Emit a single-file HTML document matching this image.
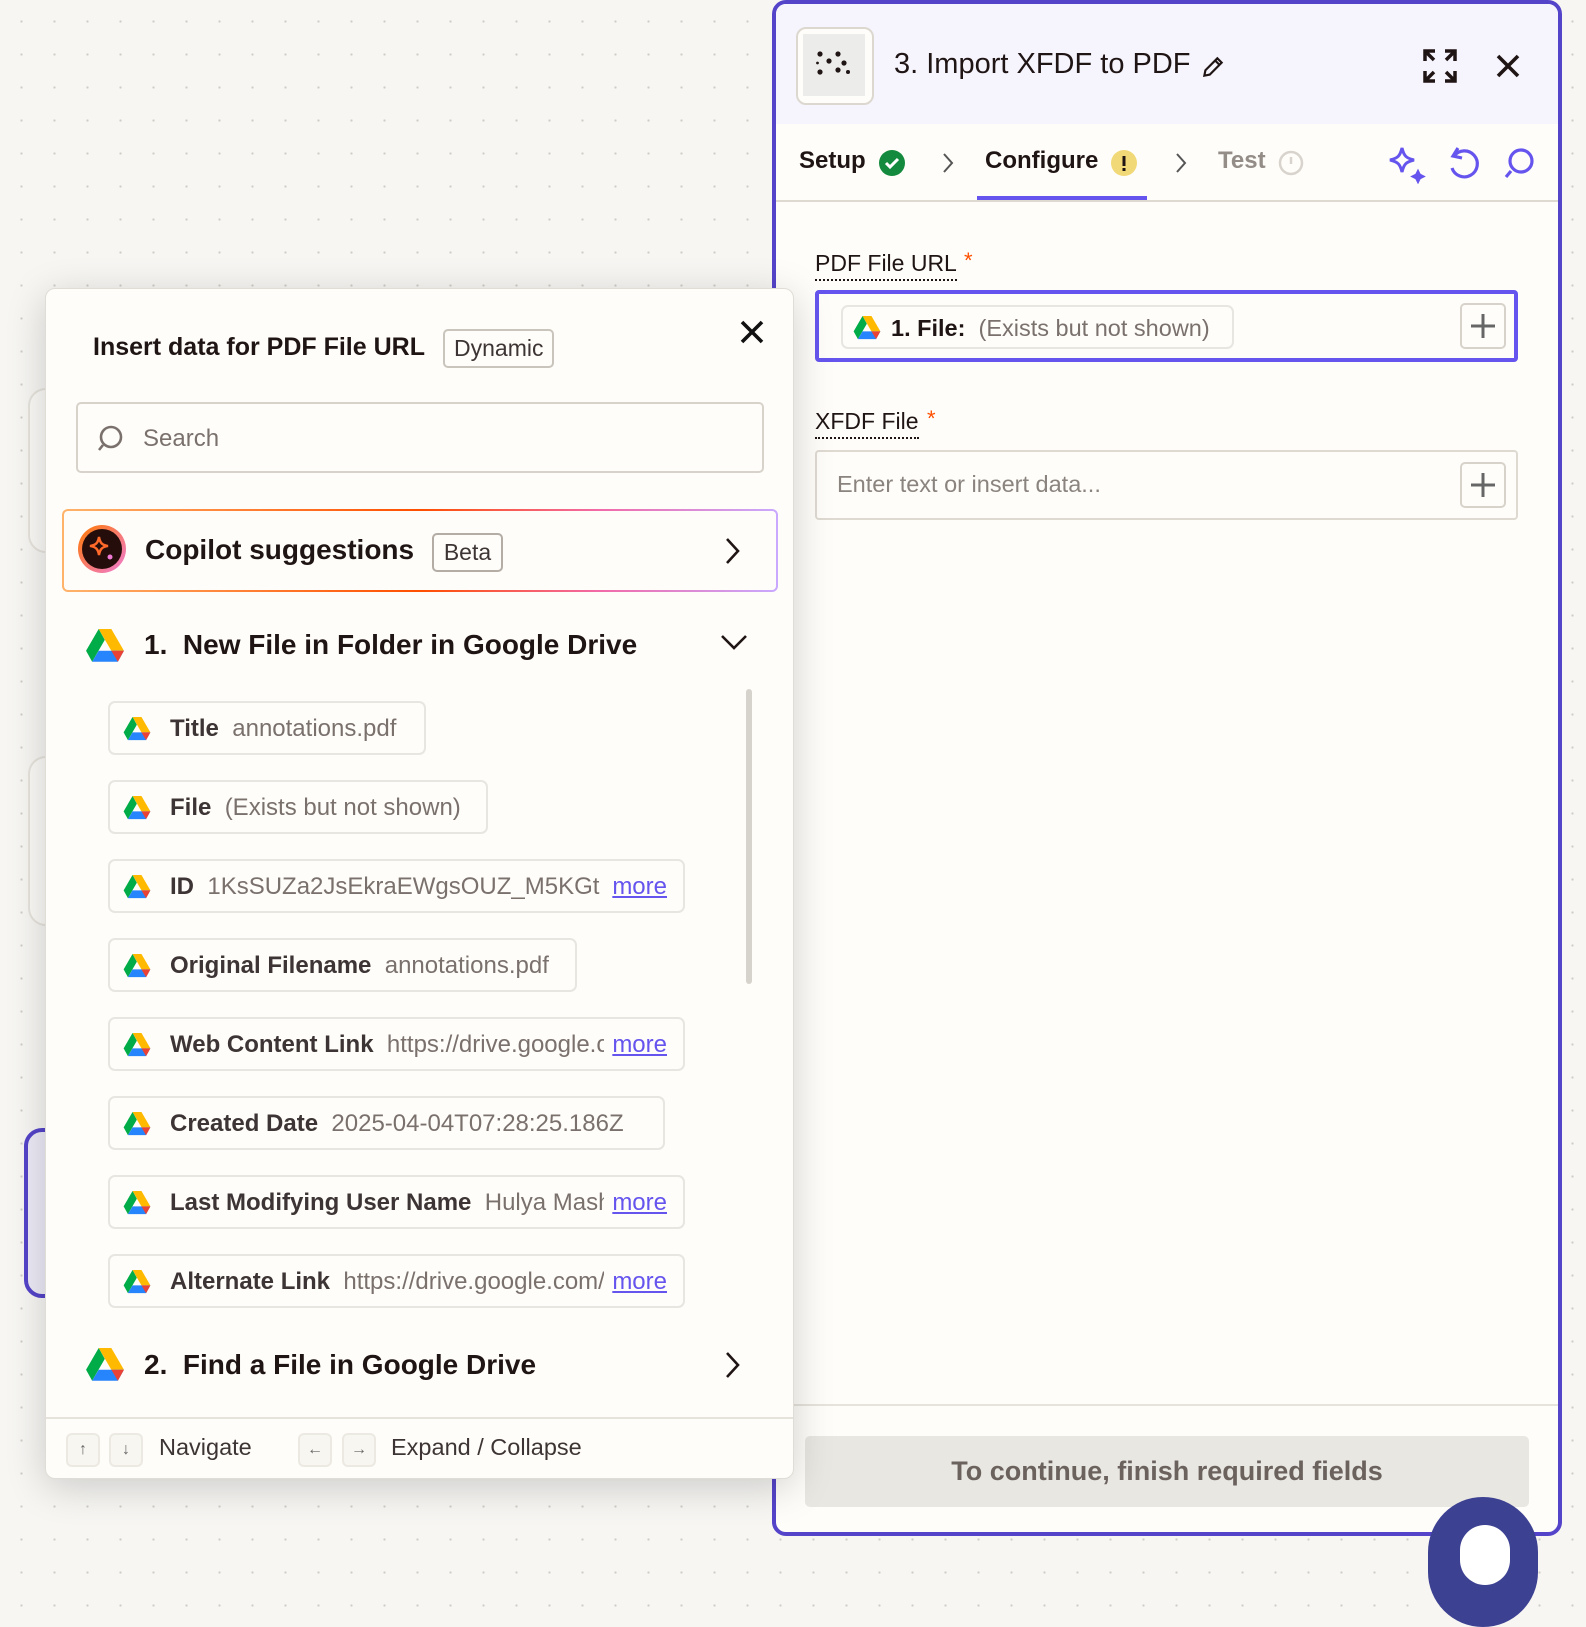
<!DOCTYPE html>
<html><head><meta charset="utf-8">
<style>
*{box-sizing:border-box;margin:0;padding:0}
body{width:1586px;height:1562px;overflow:hidden;position:relative;font-family:"Liberation Sans",sans-serif;color:#201515;
background-color:#f7f6f3;background-image:radial-gradient(#cfccc6 1px,transparent 1.3px);background-size:33px 33px;background-position:5px 5px}
.abs{position:absolute}
.bgcard{position:absolute;background:#fbfaf7;border:2px solid #e6e3dc;border-radius:18px}
#panel{position:absolute;left:772px;top:0;width:790px;height:1536px;border:4px solid #5444c9;border-radius:14px;background:#fffdf9;overflow:hidden}
#hdr{position:absolute;left:0;top:0;width:100%;height:120px;background:#f6f5fd}
.ttl{position:absolute;left:118px;top:44px;font-size:29px;color:#201515}
.tab{position:absolute;top:143px;font-size:24px;font-weight:bold}
.lbl{position:absolute;font-size:23px;color:#201515;border-bottom:2px dotted #201515;padding-bottom:2px}
.star{color:#ff4f00;font-size:22px;position:absolute}
.plus{position:absolute;width:46px;height:46px;border:2px solid #d7d3cb;border-radius:5px;background:#fffdf9}
.plus:before,.plus:after{content:"";position:absolute;background:#666;left:50%;top:50%;transform:translate(-50%,-50%)}
.plus:before{width:24px;height:3px}.plus:after{width:3px;height:24px}
#pop{position:absolute;left:45px;top:288px;width:749px;height:1191px;background:#fffdf9;border:1px solid #e0ddd6;border-radius:10px;box-shadow:0 8px 40px rgba(0,0,0,.18);overflow:hidden}
.chip{position:absolute;left:62px;height:54px;border:2px solid #e8e6e0;border-radius:7px;background:#fffdf9;font-size:24px;white-space:nowrap;overflow:hidden}
.chip svg{position:absolute;left:13px;top:14px}
.chip .t{position:absolute;left:60px;top:12px;white-space:nowrap}
.chip b{color:#3d3535}
.chip span.v{color:#7a716d}
.chip .more{position:absolute;right:0;top:12px;color:#6555ee;text-decoration:underline;background:#fffdf9;padding-left:8px;padding-right:16px;height:30px}
.key{position:absolute;top:1433px;width:34px;height:34px;border:2px solid #ece9e2;border-radius:6px;background:#f8f6f1;font-size:16px;color:#666;text-align:center;line-height:30px}
</style></head><body>
<div class="bgcard" style="left:28px;top:388px;width:60px;height:165px"></div>
<div class="bgcard" style="left:28px;top:756px;width:60px;height:170px"></div>
<div class="bgcard" style="left:24px;top:1128px;width:60px;height:170px;border:4px solid #5444c9;background:#eceaf6"></div>

<div id="panel">
 <div id="hdr"></div>
 <div class="abs" style="left:20px;top:23px;width:78px;height:78px;border:2px solid #dcd8d0;border-radius:10px;background:#fffdf9"></div>
 <div class="abs" style="left:27px;top:30px;width:62px;height:62px;background:#ececea"></div>
 <svg class="abs" style="left:40px;top:46px" width="36" height="30"><g fill="#201515"><circle cx="4" cy="4" r="2.6"/><circle cx="22" cy="4" r="2.6"/><circle cx="1.5" cy="13" r="1.4"/><circle cx="13" cy="11" r="2.6"/><circle cx="28" cy="13" r="2.6"/><circle cx="4" cy="22" r="2.6"/><circle cx="22" cy="20" r="2.6"/><circle cx="32" cy="22" r="2"/></g></svg>
 <div class="ttl">3. Import XFDF to PDF</div>
 <svg class="abs" style="left:424px;top:50px" width="26" height="26" viewBox="0 0 24 24"><path d="M4 20l1-5L16 4l4 4L9 19z M14 6l4 4" fill="none" stroke="#201515" stroke-width="2"/></svg>
 <svg class="abs" style="left:646px;top:44px" width="36" height="36" viewBox="0 0 36 36" fill="none" stroke="#201515" stroke-width="3.5"><path d="M3 13V3h10M3 3l9 9M23 3h10v10M33 3l-9 9M3 23v10h10M3 33l9-9M33 23v10H23M33 33l-9-9"/></svg>
 <svg class="abs" style="left:718px;top:48px" width="28" height="28" viewBox="0 0 28 28"><path d="M4 4l20 20M24 4L4 24" stroke="#201515" stroke-width="3.6"/></svg>
 <div class="tab" style="left:23px">Setup</div>
 <svg class="abs" style="left:102px;top:145px" width="28" height="28"><circle cx="14" cy="14" r="13" fill="#138a3d"/><path d="M8 14l4 4 8-8" stroke="#fff" stroke-width="3" fill="none"/></svg>
 <svg class="abs" style="left:165px;top:148px" width="14" height="22"><path d="M3 2l8 9-8 9" stroke="#555" stroke-width="2" fill="none"/></svg>
 <div class="tab" style="left:209px">Configure</div>
 <svg class="abs" style="left:334px;top:145px" width="28" height="28"><circle cx="14" cy="14" r="13" fill="#f2d977"/><rect x="12.5" y="7" width="3" height="10" fill="#201515"/><rect x="12.5" y="19" width="3" height="3" fill="#201515"/></svg>
 <div class="abs" style="left:201px;top:192px;width:170px;height:4px;background:#6555ee"></div>
 <svg class="abs" style="left:398px;top:148px" width="14" height="22"><path d="M3 2l8 9-8 9" stroke="#555" stroke-width="2" fill="none"/></svg>
 <div class="tab" style="left:442px;color:#938c87">Test</div>
 <svg class="abs" style="left:501px;top:145px" width="28" height="28"><circle cx="14" cy="14" r="11" stroke="#d8d4cd" stroke-width="2.5" fill="none"/><path d="M14 8v7" stroke="#d8d4cd" stroke-width="2.5"/></svg>
 <svg class="abs" style="left:610px;top:140px" width="40" height="40" viewBox="0 0 40 40" fill="none" stroke="#6555ee" stroke-width="3"><path d="M16 4c2 8 4 10 12 12-8 2-10 4-12 12-2-8-4-10-12-12 8-2 10-4 12-12z"/><path d="M32 28l1.5 3 3 1.5-3 1.5-1.5 3-1.5-3-3-1.5 3-1.5z" fill="#6555ee"/></svg>
 <svg class="abs" style="left:668px;top:140px" width="38" height="40" viewBox="0 0 38 40" fill="none" stroke="#6555ee" stroke-width="3.2"><path d="M10 12a13 13 0 1 1-2 12"/><path d="M14 4l-5 8 9 2"/></svg>
 <svg class="abs" style="left:724px;top:142px" width="36" height="36" viewBox="0 0 36 36" fill="none" stroke="#6555ee" stroke-width="3.2"><circle cx="21" cy="15" r="11"/><path d="M11 25l-5 6"/></svg>
 <div class="abs" style="left:0;top:196px;width:100%;height:2px;background:#dedad2"></div>

 <div class="lbl" style="left:39px;top:246px">PDF File URL</div><div class="star" style="left:188px;top:244px">*</div>
 <div class="abs" style="left:39px;top:286px;width:703px;height:72px;border:4px solid #6555ee;border-radius:4px;background:#fffdf9"></div>
 <div class="abs" style="left:65px;top:301px;width:393px;height:44px;border:2px solid #e8e6e0;border-radius:7px;font-size:23.5px;white-space:nowrap">
  <svg class="abs" style="left:10px;top:9px" width="28" height="24" viewBox="0 0 87 78"><path d="M29 0h29l29 50H58z" fill="#ffba00"/><path d="M29 0L0 50l14 25 29-50z" fill="#00ac47"/><path d="M14 75h59l14-25H29z" fill="#2684fc"/><path d="M73 75l14-25H58z" fill="#ea4335"/></svg>
  <span class="abs" style="left:48px;top:8px"><b>1. File:</b>&nbsp; <span style="color:#7a716d">(Exists but not shown)</span></span>
 </div>
 <div class="plus" style="left:684px;top:299px"></div>

 <div class="lbl" style="left:39px;top:404px">XFDF File</div><div class="star" style="left:151px;top:402px">*</div>
 <div class="abs" style="left:39px;top:446px;width:703px;height:70px;border:2px solid #dedad2;border-radius:4px;background:#fffdf9"></div>
 <div class="abs" style="left:61px;top:467px;font-size:23.5px;color:#8a837e">Enter text or insert data...</div>
 <div class="plus" style="left:684px;top:458px"></div>

 <div class="abs" style="left:0;top:1400px;width:100%;height:2px;background:#e6e3dc"></div>
 <div class="abs" style="left:29px;top:1432px;width:724px;height:71px;background:#e9e7e1;border-radius:5px;text-align:center;line-height:71px;font-size:27px;font-weight:bold;color:#6b625e">To continue, finish required fields</div>
</div>
<div class="abs" style="left:1428px;top:1497px;width:110px;height:130px;border-radius:55px;background:#3d4192"></div>
<div class="abs" style="left:1460px;top:1525px;width:50px;height:60px;border-radius:25px;background:#fff"></div>

<div id="pop">
 <div class="abs" style="left:47px;top:44px;font-size:25px;font-weight:bold;color:#201515">Insert data for PDF File URL</div>
 <div class="abs" style="left:397px;top:40px;padding:0 9px;height:39px;border:2px solid #c9c4bc;border-radius:5px;font-size:23px;line-height:35px;color:#3d3535">Dynamic</div>
 <svg class="abs" style="left:694px;top:31px" width="24" height="24"><path d="M2 2l20 20M22 2L2 22" stroke="#111" stroke-width="3.6"/></svg>
 <div class="abs" style="left:30px;top:113px;width:688px;height:71px;border:2px solid #d7d3cb;border-radius:5px"></div>
 <svg class="abs" style="left:48px;top:134px" width="32" height="32" viewBox="0 0 32 32" fill="none" stroke="#7a716d" stroke-width="2.6"><circle cx="17" cy="14" r="10"/><path d="M9 22l-4 5"/></svg>
 <div class="abs" style="left:97px;top:136px;font-size:24px;color:#7a716d">Search</div>

 <div class="abs" style="left:16px;top:220px;width:716px;height:83px;border-radius:6px;padding:2px;background:linear-gradient(90deg,#ffb36b,#ff4f00 50%,#f26aa8 75%,#c9a9ff)"><div style="width:100%;height:100%;background:#fffdf9;border-radius:4px"></div></div>
 <svg class="abs" style="left:31px;top:235px" width="50" height="50" viewBox="0 0 50 50"><defs><linearGradient id="g" x1="0" x2="1" y1="0" y2="1"><stop offset="0" stop-color="#ff7a00"/><stop offset="1" stop-color="#f07bd6"/></linearGradient></defs><circle cx="25" cy="25" r="24" fill="url(#g)"/><circle cx="25" cy="25" r="20" fill="#240d0a"/><path d="M22 13c1 6 3 8 9 9-6 1-8 3-9 9-1-6-3-8-9-9 6-1 8-3 9-9z" fill="none" stroke="#ff6a2a" stroke-width="2.4"/><circle cx="33" cy="33" r="2.5" fill="#f07bd6"/></svg>
 <div class="abs" style="left:99px;top:245px;font-size:28px;font-weight:bold">Copilot suggestions</div>
 <div class="abs" style="left:386px;top:244px;width:71px;height:39px;border:2px solid #b3ada5;border-radius:5px;text-align:center;line-height:35px;font-size:23px;color:#3d3535">Beta</div>
 <svg class="abs" style="left:678px;top:248px" width="18" height="28"><path d="M3 2l11 12L3 26" stroke="#201515" stroke-width="2.6" fill="none"/></svg>

 <svg class="abs" style="left:40px;top:340px" width="38" height="34" viewBox="0 0 87 78"><path d="M29 0h29l29 50H58z" fill="#ffba00"/><path d="M29 0L0 50l14 25 29-50z" fill="#00ac47"/><path d="M14 75h59l14-25H29z" fill="#2684fc"/><path d="M73 75l14-25H58z" fill="#ea4335"/></svg>
 <div class="abs" style="left:98px;top:340px;font-size:28px;font-weight:bold">1.&nbsp;&nbsp;New File in Folder in Google Drive</div>
 <svg class="abs" style="left:674px;top:344px" width="28" height="18"><path d="M2 3l12 12L26 3" stroke="#201515" stroke-width="2.6" fill="none"/></svg>
 <div class="abs" style="left:700px;top:400px;width:6px;height:295px;border-radius:3px;background:#d6d3cc"></div>

 <div class="chip" style="top:412px;width:318px"><svg width="28" height="24" viewBox="0 0 87 78"><path d="M29 0h29l29 50H58z" fill="#ffba00"/><path d="M29 0L0 50l14 25 29-50z" fill="#00ac47"/><path d="M14 75h59l14-25H29z" fill="#2684fc"/><path d="M73 75l14-25H58z" fill="#ea4335"/></svg><div class="t"><b>Title</b>&nbsp; <span class="v">annotations.pdf</span></div></div>
 <div class="chip" style="top:491px;width:380px"><svg width="28" height="24" viewBox="0 0 87 78"><path d="M29 0h29l29 50H58z" fill="#ffba00"/><path d="M29 0L0 50l14 25 29-50z" fill="#00ac47"/><path d="M14 75h59l14-25H29z" fill="#2684fc"/><path d="M73 75l14-25H58z" fill="#ea4335"/></svg><div class="t"><b>File</b>&nbsp; <span class="v">(Exists but not shown)</span></div></div>
 <div class="chip" style="top:570px;width:577px"><svg width="28" height="24" viewBox="0 0 87 78"><path d="M29 0h29l29 50H58z" fill="#ffba00"/><path d="M29 0L0 50l14 25 29-50z" fill="#00ac47"/><path d="M14 75h59l14-25H29z" fill="#2684fc"/><path d="M73 75l14-25H58z" fill="#ea4335"/></svg><div class="t"><b>ID</b>&nbsp; <span class="v">1KsSUZa2JsEkraEWgsOUZ_M5KGt</span></div><span class="more">more</span></div>
 <div class="chip" style="top:649px;width:469px"><svg width="28" height="24" viewBox="0 0 87 78"><path d="M29 0h29l29 50H58z" fill="#ffba00"/><path d="M29 0L0 50l14 25 29-50z" fill="#00ac47"/><path d="M14 75h59l14-25H29z" fill="#2684fc"/><path d="M73 75l14-25H58z" fill="#ea4335"/></svg><div class="t"><b>Original Filename</b>&nbsp; <span class="v">annotations.pdf</span></div></div>
 <div class="chip" style="top:728px;width:577px"><svg width="28" height="24" viewBox="0 0 87 78"><path d="M29 0h29l29 50H58z" fill="#ffba00"/><path d="M29 0L0 50l14 25 29-50z" fill="#00ac47"/><path d="M14 75h59l14-25H29z" fill="#2684fc"/><path d="M73 75l14-25H58z" fill="#ea4335"/></svg><div class="t"><b>Web Content Link</b>&nbsp; <span class="v">https://drive.google.com</span></div><span class="more">more</span></div>
 <div class="chip" style="top:807px;width:557px"><svg width="28" height="24" viewBox="0 0 87 78"><path d="M29 0h29l29 50H58z" fill="#ffba00"/><path d="M29 0L0 50l14 25 29-50z" fill="#00ac47"/><path d="M14 75h59l14-25H29z" fill="#2684fc"/><path d="M73 75l14-25H58z" fill="#ea4335"/></svg><div class="t"><b>Created Date</b>&nbsp; <span class="v">2025-04-04T07:28:25.186Z</span></div></div>
 <div class="chip" style="top:886px;width:577px"><svg width="28" height="24" viewBox="0 0 87 78"><path d="M29 0h29l29 50H58z" fill="#ffba00"/><path d="M29 0L0 50l14 25 29-50z" fill="#00ac47"/><path d="M14 75h59l14-25H29z" fill="#2684fc"/><path d="M73 75l14-25H58z" fill="#ea4335"/></svg><div class="t"><b>Last Modifying User Name</b>&nbsp; <span class="v">Hulya Masharipova</span></div><span class="more">more</span></div>
 <div class="chip" style="top:965px;width:577px"><svg width="28" height="24" viewBox="0 0 87 78"><path d="M29 0h29l29 50H58z" fill="#ffba00"/><path d="M29 0L0 50l14 25 29-50z" fill="#00ac47"/><path d="M14 75h59l14-25H29z" fill="#2684fc"/><path d="M73 75l14-25H58z" fill="#ea4335"/></svg><div class="t"><b>Alternate Link</b>&nbsp; <span class="v">https://drive.google.com/file</span></div><span class="more">more</span></div>

 <svg class="abs" style="left:40px;top:1059px" width="38" height="34" viewBox="0 0 87 78"><path d="M29 0h29l29 50H58z" fill="#ffba00"/><path d="M29 0L0 50l14 25 29-50z" fill="#00ac47"/><path d="M14 75h59l14-25H29z" fill="#2684fc"/><path d="M73 75l14-25H58z" fill="#ea4335"/></svg>
 <div class="abs" style="left:98px;top:1060px;font-size:28px;font-weight:bold">2.&nbsp;&nbsp;Find a File in Google Drive</div>
 <svg class="abs" style="left:678px;top:1062px" width="18" height="28"><path d="M3 2l11 12L3 26" stroke="#201515" stroke-width="2.6" fill="none"/></svg>
 <div class="abs" style="left:0;top:1128px;width:100%;height:2px;background:#e6e3dc"></div>
</div>
<div class="key" style="left:66px">↑</div>
<div class="key" style="left:109px">↓</div>
<div class="abs" style="left:159px;top:1434px;font-size:23.5px;color:#3d3535">Navigate</div>
<div class="key" style="left:298px">←</div>
<div class="key" style="left:342px">→</div>
<div class="abs" style="left:391px;top:1434px;font-size:23.5px;color:#3d3535">Expand / Collapse</div>
</body></html>
